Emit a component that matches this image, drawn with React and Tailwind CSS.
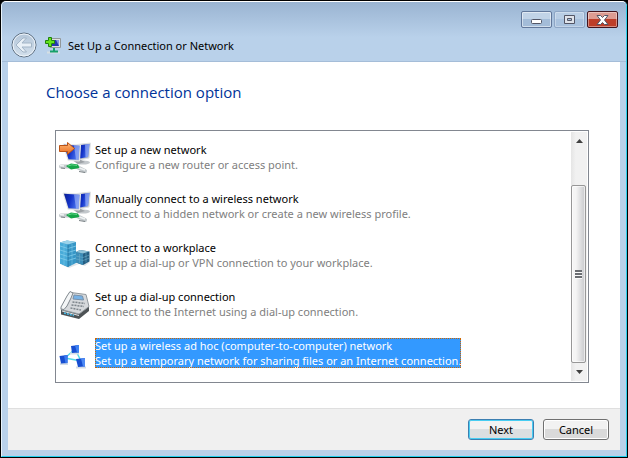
const monitors = (
  <>
    <ellipse cx="24" cy="20.500" rx="7" ry="2" fill="#c3c8cc" />
    <path d="M18 2.500 31.500 1 30 16 20 18Z" fill="#b9bdc1" stroke="#dfe2e4" />
    <path d="M19 3.500 30.500 2 29 15 20.500 16.500Z" fill="url(#screen)" />
    <path d="M26 2.600 30.500 2 29 15 26.500 15.500Z" fill="#a9bdf8" opacity=".6" />
    <path d="M13 18 20 17 26 20 19 22Z" fill="#9da2a6" />
    <path d="M4 2 21.500 3 20.500 19 9 18.500Z" fill="#c5c9cd" stroke="#e9ebec" />
    <path d="M5 2.800 20.500 3.800 19.500 17.800 9.500 17.300Z" fill="url(#screen)" />
    <path d="M15 3.400 20.500 3.800 19.500 17.800 17 17.700Z" fill="#a9bdf8" opacity=".6" />
    <path d="M2 24.500 8 24.500 18 25 26 29" fill="none" stroke="#c3c9cc" strokeWidth="4" strokeLinecap="round" />
    <path d="M1 23.500 5 24M19 25.500 26 28" stroke="#eff2f3" strokeWidth="1.500" />
    <path d="M2 26 6 26.500M20 29.500 26 30.500" stroke="#7c8387" />
    <path d="M7 24 12 21.500 19 22.500 20.500 26 12 27.500Z" fill="#16a548" />
    <path d="M9 24 13 22.800 18 23.500" fill="none" stroke="#5bd583" />
  </>
);

const icons = {
  router: (
    <>
      {monitors}
      <path d="M.5 3.500H8.500V.5L15.500 6.500 8.500 12.500V9.500H.5Z" fill="url(#arrow)" stroke="#b95316" />
    </>
  ),
  wireless: monitors,
  workplace: (
    <>
      <path d="M3 25 10 28 20 24 26 26 31 22Z" fill="#dfe4e8" />
      <path d="M17 12 21 10 30.500 11.500V21.500L24 25 17 22.500Z" fill="#245f84" />
      <path d="M17 12 24 13.500V25L17 22.500Z" fill="#3c8db8" />
      <path d="M17 12 21 10 30.500 11.500 24 13.500Z" fill="#8fc3d9" />
      <path d="M17 16 24 17.500 30.500 15M17 19 24 20.500 30.500 18M20.500 14V23M27 13V22.500" fill="none" stroke="#69abc8" strokeWidth=".6" />
      <path d="M1 2.500 8 .5 17 2V23L9 27 1 23.500Z" fill="#3796c6" />
      <path d="M1 2.500 9 4.500V27L1 23.500Z" fill="#48abd9" />
      <path d="M1 2.500 8 .5 17 2 9 4.500Z" fill="#9bd3ea" />
      <path d="M1 6 9 8.500 17 6M1 10 9 12.500 17 10M1 14 9 16.500 17 14M1 18 9 20.500 17 18" fill="none" stroke="#83cdeb" strokeWidth=".8" />
      <path d="M5 4V25M13 4V25" stroke="#7ac6e6" strokeWidth=".6" />
      <path d="M9 4.500V27" stroke="#1f6f9d" strokeWidth=".8" />
    </>
  ),
  phone: (
    <>
      <path d="M2 20 20 25 30 17V22L20 30 2 25.500Z" fill="#4d5255" />
      <path d="M3 18 12 3.500 27 5.500 30 17.500 20 25 2 20.500Z" fill="#d6d9dc" stroke="#92999e" />
      <path d="M2 18 8 7 11 2.500 14 4 12 9 8 17 5 20.500 2 20Z" fill="#f3f5f6" stroke="#7f878d" />
      <path d="M15 6 23.500 7 24.500 11 14 10Z" fill="#77b2e6" stroke="#7890a8" />
      <path d="M13.500 13 26 14.500M12.500 16 25 17.500M11.500 19 22 21" stroke="#7c848a" strokeWidth="1.500" strokeDasharray="2 1" />
      <path d="M3 22 20 26.500" stroke="#e1e4e6" />
      <path d="M5 24 15 26.500" stroke="#49bce9" strokeWidth="1.500" strokeDasharray="2 1" />
    </>
  ),
  adhoc: (
    <>
      <path d="M16 11 6 20 22 23Z" fill="none" stroke="#55dbe6" strokeWidth="1.500" />
      <path d="M11 15.500H20M1 26H9M17 29.500H27" stroke="#d3dce6" strokeWidth="2" />
      <path d="M12 8 20 7V14.500L13 15Z" fill="#174ed1" />
      <path d="M16 7.500 20 7V14.500L18 14.600Z" fill="#3f82f2" />
      <path d="M.5 18 8.500 17V25L2 25.500Z" fill="#174ed1" />
      <path d="M5 17.500 8.500 17V25L6.500 25.200Z" fill="#3a7af0" />
      <path d="M17 21 26 20V28.500L19 29Z" fill="#174ed1" />
      <path d="M22 20.500 26 20V28.500L24 28.600Z" fill="#4d89f4" />
    </>
  ),
};

const options = [
  { icon: 'router', title: 'Set up a new network', text: 'Configure a new router or access point.' },
  { icon: 'wireless', title: 'Manually connect to a wireless network', text: 'Connect to a hidden network or create a new wireless profile.' },
  { icon: 'workplace', title: 'Connect to a workplace', text: 'Set up a dial-up or VPN connection to your workplace.' },
  { icon: 'phone', title: 'Set up a dial-up connection', text: 'Connect to the Internet using a dial-up connection.' },
  { icon: 'adhoc', title: 'Set up a wireless ad hoc (computer-to-computer) network', text: 'Set up a temporary network for sharing files or an Internet connection.', selected: true },
];

function Gradients() {
  return (
    <svg className="absolute size-0" aria-hidden="true">
      <defs>
        <linearGradient id="screen" x2="1" y2="0.300">
          <stop offset="0" stopColor="#0a1f94" />
          <stop offset="0.500" stopColor="#1433c8" />
          <stop offset="1" stopColor="#4a74f0" />
        </linearGradient>
        <linearGradient id="arrow" x2="0" y2="1">
          <stop offset="0" stopColor="#ffb877" />
          <stop offset="1" stopColor="#ea6a1c" />
        </linearGradient>
        <linearGradient id="back" x2="0" y2="1">
          <stop offset="0" stopColor="#b4c6d9" />
          <stop offset="1" stopColor="#d3e0ec" />
        </linearGradient>
      </defs>
    </svg>
  );
}

function Caption() {
  const base = 'flex h-[17px] w-[31px] items-center justify-center rounded-[2px] border';
  return (
    <div className="flex gap-[2px] pt-[9px]">
      <button type="button" aria-label="Minimize" className={`${base} border-[#61779a] bg-linear-to-b from-[#c1d3e7] from-50% to-[#a3bcd8] to-50% inset-ring inset-ring-white/50`}>
        <svg width="11" height="5" className="mt-1"><rect x=".5" y=".5" width="10" height="4" rx="1" fill="#fff" stroke="#535666" /></svg>
      </button>
      <button type="button" aria-label="Maximize" className={`${base} border-[#8ea6c5] bg-linear-to-b from-[#b9cee5] from-50% to-[#a9c2de] to-50% inset-ring inset-ring-white/30`}>
        <svg width="11" height="9"><path d="M.5.500H10.500V8.500H.5ZM3.500 3.500V5.500H7.500V3.500Z" fill="#dfe3ea" fillRule="evenodd" stroke="#535666" /></svg>
      </button>
      <button type="button" aria-label="Close" className={`${base} border-[#43141d] bg-linear-to-b from-[#dd9c92] from-50% to-[#bd3e29] to-50% inset-ring inset-ring-white/40`}>
        <svg width="13" height="10"><path d="M1 .5H4.500L6.500 2.500 8.500.500H12L8.500 5 12 9.500H8.500L6.500 7.500 4.500 9.500H1L4.500 5Z" fill="#fff" stroke="#535666" /></svg>
      </button>
    </div>
  );
}

function Header() {
  return (
    <header className="flex h-[60px] items-start justify-between border-b border-[#a5bdd8] bg-linear-to-b from-[#9ab4d2] to-[#b9d1ea] to-60% pl-[9px] pr-2">
      <div className="flex items-center pt-[30px]">
        <button type="button" aria-label="Back">
          <svg width="26" height="26" viewBox="0 0 26 26">
            <circle cx="13" cy="13" r="12" fill="url(#back)" stroke="#5f6f80" />
            <circle cx="13" cy="13" r="11" fill="none" stroke="#eef4fa" />
            <path d="M5 13 12 6H15.500L11 11H20.500V15H11L15.500 20H12Z" fill="#e8f0f7" stroke="#a3b5c7" />
          </svg>
        </button>
        <svg width="16" height="17" viewBox="0 0 16 17" className="ml-2">
          <path d="M5 1.500H15.500V10.500H5Z" fill="#dce0df" stroke="#92989a" />
          <path d="M7 3H14V9H7Z" fill="#2637ad" />
          <path d="M11 3H14V9Z" fill="#8296e1" />
          <path d="M2 15.500H15" stroke="#d6dfe2" strokeWidth="2" />
          <path d="M9 11V15M5 14.500H13" stroke="#16a06a" strokeWidth="2" />
          <path d="M3.500.500H6.500V3.500H9.500V6.500H6.500V9.500H3.500V6.500H.5V3.500H3.500Z" fill="#65e31d" stroke="#20820e" />
        </svg>
        <h1 className="ml-[7px] text-black">Set Up a Connection or Network</h1>
      </div>
      <Caption />
    </header>
  );
}

function Option({ option }) {
  return (
    <li>
      <button type="button" aria-pressed={!!option.selected} className="flex h-[30px] items-start gap-1 text-left">
        <svg width="32" height="32" viewBox="0 0 32 32" className="shrink-0">{icons[option.icon]}</svg>
        <span className={`block whitespace-nowrap ${option.selected ? 'bg-[#3399ff] text-white outline-1 -outline-offset-1 outline-dotted outline-[#cc6600]' : 'text-[#808080]'}`}>
          <span className={`block ${option.selected ? '' : 'text-black'}`}>{option.title}</span>
          <span className="block">{option.text}</span>
        </span>
      </button>
    </li>
  );
}

function Scrollbar() {
  return (
    <div className="m-px flex w-4 flex-col bg-linear-to-r from-[#e5e5e5] to-[#f1f1f1] to-30%">
      <button type="button" aria-label="Scroll up" className="flex h-[17px] items-center justify-center">
        <svg width="7" height="4"><path d="M0 4 3.500 0 7 4Z" fill="#404040" /></svg>
      </button>
      <div className="mt-9 mr-px flex flex-1 items-center justify-center rounded-[2px] border border-[#979797] bg-linear-to-r from-[#f5f5f5] from-30% to-[#c8c9cc] inset-ring inset-ring-white/60">
        <svg width="7" height="9"><path d="M0 1H7M0 4H7M0 7H7" stroke="#6b6e72" strokeWidth="2" /><path d="M0 2.500H7M0 5.500H7M0 8.500H7" stroke="#fafafa" /></svg>
      </div>
      <button type="button" aria-label="Scroll down" className="flex h-[18px] items-center justify-center">
        <svg width="7" height="4"><path d="M0 0H7L3.500 4Z" fill="#404040" /></svg>
      </button>
    </div>
  );
}

export default function App() {
  return (
    <div className="min-h-screen bg-black font-['Noto_Sans','Open_Sans',sans-serif] text-[11px] leading-[15px] text-black">
      <Gradients />
      <div className="mx-auto flex min-h-screen flex-col overflow-hidden rounded-t-[6px] border border-black bg-[#b9d1ea]">
        <div className="flex flex-1 flex-col overflow-hidden rounded-t-[5px] border border-t-white border-r-[#2fd0ec] border-b-[#22cfee] border-l-[#e8f3fb]">
          <Header />
          <div className="mx-[6px] mb-[6px] flex flex-1 flex-col bg-white">
            <main className="flex-1 px-[38px] pt-[18px]">
              <h2 className="font-['Open_Sans','Noto_Sans',sans-serif] text-[15px] leading-6 text-[#003399]">Choose a connection option</h2>
              <div className="mt-[26px] mr-[-7px] ml-[9px] flex border border-[#828790]">
                <ul className="flex-1 space-y-[19px] pt-[11px] pb-[14px] pl-[3px]">
                  {options.map((option) => (
                    <Option key={option.icon} option={option} />
                  ))}
                </ul>
                <Scrollbar />
              </div>
            </main>
            <footer className="flex h-[42px] items-center justify-end gap-[9px] border-t border-[#dfdfdf] bg-[#f0f0f0] pr-[11px]">
              <button type="button" className="h-[21px] w-[66px] rounded-[3px] border border-[#3c7fb1] bg-linear-to-b from-[#f2f2f2] from-50% to-[#dcdfe1] to-50% inset-ring inset-ring-[#48cdf2]">
                Next
              </button>
              <button type="button" className="h-[21px] w-[66px] rounded-[3px] border border-[#707070] bg-linear-to-b from-[#f2f2f2] from-50% to-[#dadada] to-50% inset-ring inset-ring-white">
                Cancel
              </button>
            </footer>
          </div>
        </div>
      </div>
    </div>
  );
}
